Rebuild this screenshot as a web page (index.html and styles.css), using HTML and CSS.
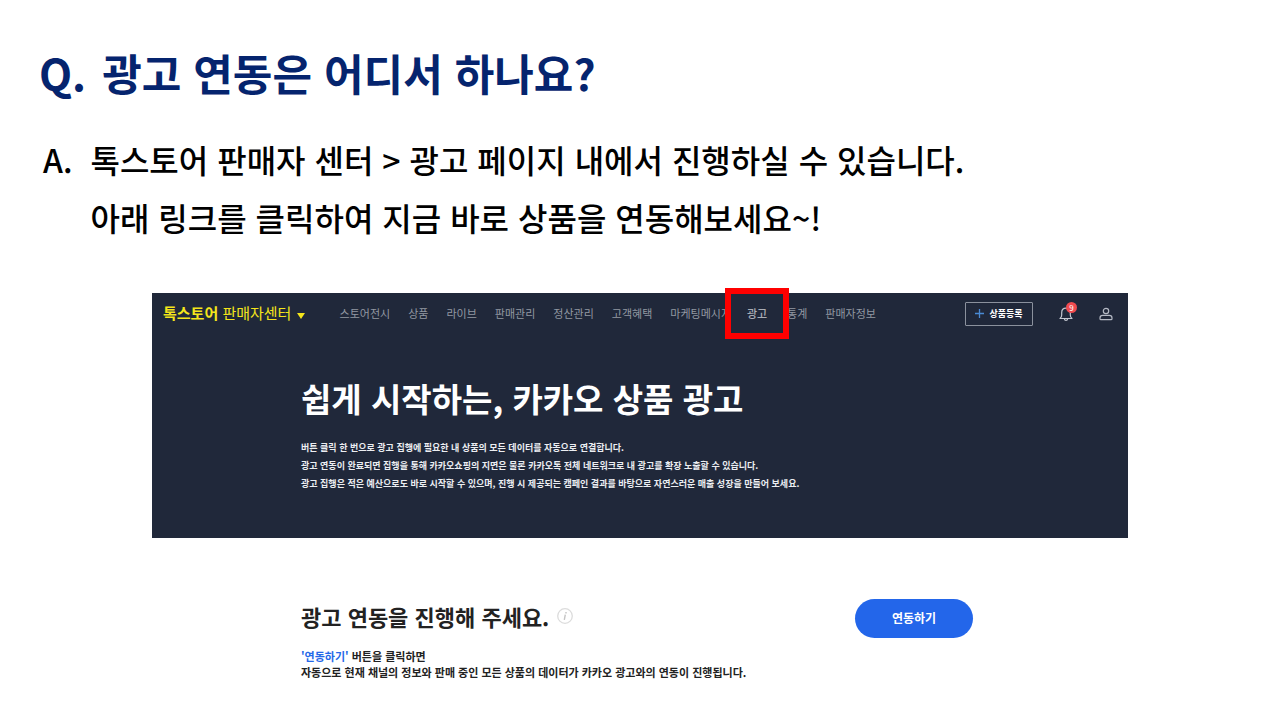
FILE: index.html
```html
<!DOCTYPE html>
<html lang="ko">
<head>
    <meta charset="UTF-8">
    <meta name="viewport" content="width=device-width, initial-scale=1.0">
    <title>광고 연동은 어디서 하나요?</title>
    <link rel="stylesheet" href="styles.css">
</head>
<body>
    <main class="faq">
        <h1 class="question"><span>Q.</span><span>광고 연동은 어디서 하나요?</span></h1>
        <div class="answer">
            <span>A.</span>
            <p>톡스토어 판매자 센터 &gt; 광고 페이지 내에서 진행하실 수 있습니다.<br>아래 링크를 클릭하여 지금 바로 상품을 연동해보세요~!</p>
        </div>
    </main>

    <div class="store">
        <header class="topbar">
            <a href="#" class="logo"><b>톡스토어</b> 판매자센터
                <svg class="caret" viewBox="0 0 8 6"><path d="M0 0h8L4 6z" fill="currentColor"/></svg>
            </a>
            <nav class="menu">
                <a href="#">스토어전시</a>
                <a href="#">상품</a>
                <a href="#">라이브</a>
                <a href="#">판매관리</a>
                <a href="#">정산관리</a>
                <a href="#">고객혜택</a>
                <a href="#">마케팅메시지</a>
                <div class="marked"><a href="#" class="mark">광고</a></div>
                <a href="#">통계</a>
                <a href="#">판매자정보</a>
            </nav>
            <div class="tools">
                <button class="register">
                    <svg width="9" height="9" viewBox="0 0 9 9"><path d="M4.5 0v9M0 4.5h9" stroke="#4a8ad4" stroke-width="1.3" fill="none"/></svg>
                    상품등록
                </button>
                <button class="icon-button" aria-label="알림">
                    <svg width="14" height="16" viewBox="0 0 14 16" fill="none" stroke="#c3c7d0" stroke-width="1.2" stroke-linejoin="round">
                        <path d="M1 12.5c1.2-.8 1.7-1.8 1.7-3.4V6.7C2.7 4 4.5 2.2 7 2.2s4.3 1.8 4.3 4.5v2.400c0 1.600.5 2.600 1.700 3.400z"/>
                        <path d="M5.3 12.700c.2 1.300.8 1.800 1.700 1.800s1.500-.5 1.700-1.800"/>
                    </svg>
                    <span class="badge">9</span>
                </button>
                <button class="icon-button" aria-label="내 정보">
                    <svg width="14" height="16" viewBox="0 0 14 16" fill="none" stroke="#b4b9c4" stroke-width="1.2">
                        <circle cx="7" cy="5" r="2.7"/>
                        <path d="M3.700 9.400h6.600c1.600 0 2.700 1.100 2.700 2.500v.8c0 .6-.4 1-1 1H2c-.6 0-1-.4-1-1v-.8c0-1.400 1.100-2.500 2.700-2.500z"/>
                    </svg>
                </button>
            </div>
        </header>

        <section class="hero">
            <h2>쉽게 시작하는, 카카오 상품 광고</h2>
            <p>버튼 클릭 한 번으로 광고 집행에 필요한 내 상품의 모든 데이터를 자동으로 연결합니다.<br>광고 연동이 완료되면 집행을 통해 카카오쇼핑의 지면은 물론 카카오톡 전체 네트워크로 내 광고를 확장 노출할 수 있습니다.<br>광고 집행은 적은 예산으로도 바로 시작할 수 있으며, 진행 시 제공되는 캠페인 결과를 바탕으로 자연스러운 매출 성장을 만들어 보세요.</p>
        </section>

        <section class="connect">
            <div>
                <h3>광고 연동을 진행해 주세요.
                    <svg width="16" height="16" viewBox="0 0 16 16" fill="none" stroke="#dcdcdc">
                        <circle cx="8" cy="8" r="7.3" stroke-width="1.3"/>
                        <path d="M8.3 6.6 7.3 11.8M9 4v1.4" stroke="#c4c4c4" stroke-width="1.4"/>
                    </svg>
                </h3>
                <p><em>'연동하기'</em> 버튼을 클릭하면<br>자동으로 현재 채널의 정보와 판매 중인 모든 상품의 데이터가 카카오 광고와의 연동이 진행됩니다.</p>
            </div>
            <button class="connect-button">연동하기</button>
        </section>
    </div>
</body>
</html>
```
FILE: styles.css
```css
* {
    box-sizing: border-box;
}
body {
    margin: 0;
    background: #fff;
    color: #000;
    font-family: "Noto Sans CJK KR", sans-serif;
}
h1, h2, h3, p {
    margin: 0;
}
a {
    color: inherit;
    text-decoration: none;
}
button {
    font-family: inherit;
    cursor: pointer;
}

/* question and answer */
.faq {
    padding: 40px 39px 0;
}
.question {
    display: flex;
    gap: 16px;
    color: #05246e;
    font-size: 43px;
    line-height: 64px;
}
.answer {
    display: flex;
    gap: 18px;
    margin-top: 26px;
    padding-left: 4px;
    font-size: 32px;
    font-weight: 500;
    line-height: 58px;
}

/* seller center */
.store {
    max-width: 976px;
    margin: 47px auto 0;
}
.topbar {
    display: flex;
    align-items: center;
    height: 42px;
    padding: 0 15px 0 11px;
    background: #20283a;
    white-space: nowrap;
}
.logo {
    padding-bottom: 2px;
    color: #f4e51b;
    font-size: 15px;
    line-height: 20px;
}
.caret {
    width: 8px;
    height: 6px;
    margin-left: 1px;
    vertical-align: 0;
}
.menu {
    display: flex;
    align-items: center;
    gap: 18px;
    margin-left: 35px;
    padding-bottom: 2px;
    color: #9298a2;
    font-size: 11px;
}
.marked {
    position: relative;
    width: 20px;
    height: 16px;
}
.mark {
    position: absolute;
    top: -17px;
    left: -24px;
    width: 64px;
    height: 51px;
    border: 6px solid #f00;
    background: #20283a;
    color: #a9adb5;
    font-weight: 500;
    line-height: 39px;
    text-align: center;
}
.tools {
    display: flex;
    align-items: center;
    gap: 26px;
    margin-left: auto;
}
.register {
    display: flex;
    align-items: center;
    justify-content: center;
    gap: 5px;
    width: 68px;
    height: 24px;
    padding: 0 0 1px;
    border: 1px solid #8b919d;
    border-radius: 1px;
    background: none;
    color: #fff;
    font-size: 9px;
    font-weight: 700;
}
.icon-button {
    position: relative;
    display: flex;
    padding: 0;
    border: 0;
    background: none;
}
.badge {
    position: absolute;
    top: -4px;
    right: -4px;
    width: 11px;
    height: 11px;
    border-radius: 50%;
    background: #f04b4f;
    color: #fff;
    font-size: 8px;
    line-height: 11px;
    text-align: center;
}
.hero {
    padding: 38px 149px 45px;
    background: #20283a;
    color: #fff;
}
.hero h2 {
    font-size: 33px;
    line-height: 50px;
}
.hero p {
    margin-top: 16px;
    color: #eceef2;
    font-size: 9px;
    font-weight: 700;
    line-height: 18px;
    white-space: nowrap;
}
.connect {
    display: flex;
    align-items: flex-start;
    justify-content: space-between;
    padding: 61px 155px 40px 149px;
    color: #222;
}
.connect h3 {
    display: flex;
    align-items: center;
    gap: 8px;
    font-size: 22px;
    line-height: 34px;
}
.connect p {
    margin-top: 15px;
    font-size: 11px;
    font-weight: 700;
    line-height: 16px;
}
.connect em {
    color: #2468e8;
    font-style: normal;
}
.connect-button {
    width: 118px;
    height: 39px;
    padding: 0 0 2px;
    border: 0;
    border-radius: 20px;
    background: #2366ea;
    color: #fff;
    font-size: 12px;
    font-weight: 700;
}
```
